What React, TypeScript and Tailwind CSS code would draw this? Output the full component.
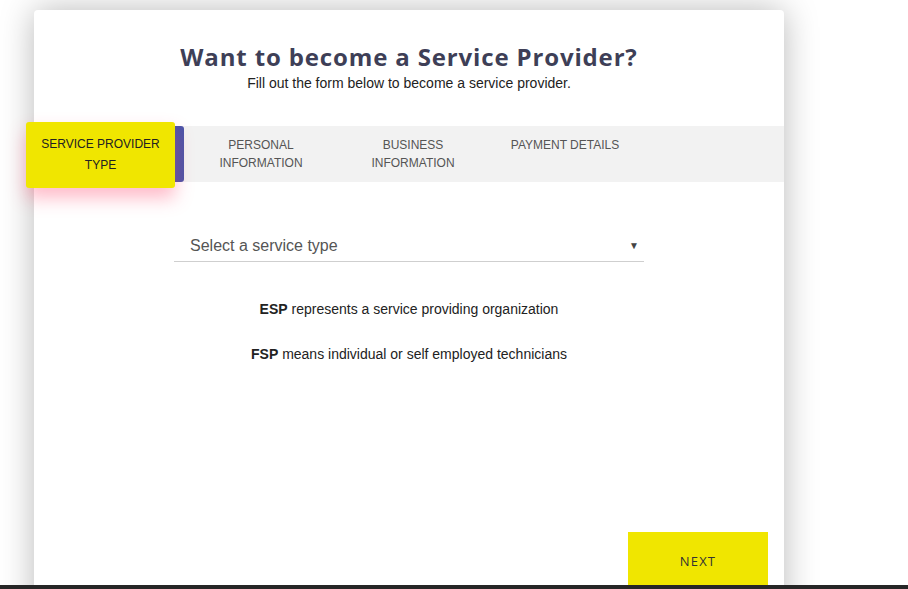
import React from "react";

const tabs = [
  ["PERSONAL", "INFORMATION"],
  ["BUSINESS", "INFORMATION"],
  ["PAYMENT DETAILS"],
];

export default function App() {
  return (
    <div
      className="relative h-[589px] w-[908px] overflow-hidden bg-white"
      style={{ fontFamily: '"Liberation Sans", Arial, sans-serif' }}
    >
      <div className="pl-[34px] pt-[10px]">
        <div className="flex h-[640px] w-[750px] flex-col rounded-[4px] bg-white shadow-[0_0_34px_rgba(0,0,0,0.28)]">
          <h1
            className="pt-[32px] text-center text-[24px] font-bold leading-[30px] tracking-[0.85px] text-[#3e3f57]"
            style={{ fontFamily: '"Open Sans", sans-serif' }}
          >
            Want to become a Service Provider?
          </h1>
          <p className="mt-[2px] text-center text-[14px] leading-[18px] text-[#222]">
            Fill out the form below to become a service provider.
          </p>

          <div className="mt-[34px] flex h-[56px] w-full bg-[#f2f2f2]">
            <div className="relative w-[150px] rounded-r-[3px] bg-gradient-to-r from-[#5560b8] to-[#4a54a8]">
              <div className="absolute left-[-8px] top-[-4px] h-[66px] w-[149px] rounded-[3px] bg-[#f0e600] pt-[12px] text-center text-[12px] leading-[21px] text-[#222] shadow-[0_10px_18px_rgba(255,60,100,0.35)]">
                <div>SERVICE PROVIDER</div>
                <div>TYPE</div>
              </div>
            </div>
            <div className="ml-[1px] flex">
              {tabs.map((t, i) => (
                <div
                  key={i}
                  className="w-[152px] pt-[10px] text-center text-[12px] leading-[18px] text-[#555]"
                >
                  {t.map((l) => (
                    <div key={l}>{l}</div>
                  ))}
                </div>
              ))}
            </div>
          </div>

          <div className="mx-auto mt-[40px] flex h-[40px] w-[470px] items-center justify-between border-b border-[#cfcfcf] pl-[16px] pr-[5px] pt-[8px] text-[16px] text-[#555]">
            <span>Select a service type</span>
            <span className="text-[10px] text-[#444]">▼</span>
          </div>

          <p className="mt-[37px] text-center text-[14px] leading-[20px] text-[#222]">
            <b>ESP</b> represents a service providing organization
          </p>
          <p className="mt-[25px] text-center text-[14px] leading-[20px] text-[#222]">
            <b>FSP</b> means individual or self employed technicians
          </p>

          <button
            className="mr-[16px] mt-[168px] flex h-[58px] w-[140px] items-center justify-center self-end bg-[#f0e600] pt-[2px] text-[13px] tracking-[1.2px] text-[#333]"
            style={{ fontFamily: '"Open Sans", sans-serif' }}
          >
            NEXT
          </button>
        </div>
      </div>
      <div className="absolute bottom-0 left-0 h-[4px] w-full bg-[#262626]" />
    </div>
  );
}
